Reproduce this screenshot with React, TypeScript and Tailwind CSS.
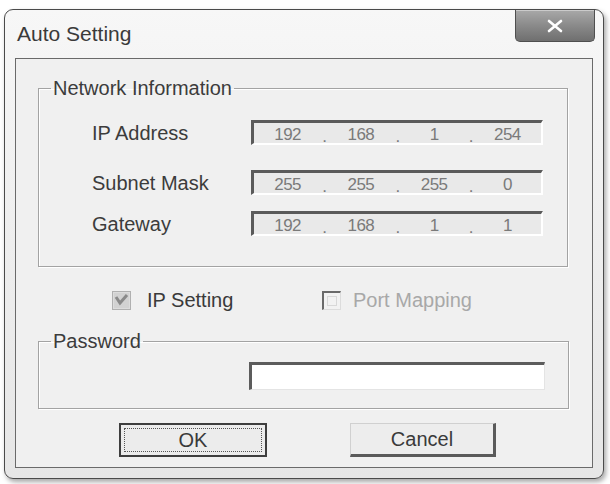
import React from "react";

const font = { fontFamily: '"Liberation Sans", Arial, sans-serif' };

function IpField({ parts }: { parts: string[] }) {
  return (
    <div className="w-[292px] h-[25px] bg-[#e9e9e9] border-t-[3px] border-l-[3px] border-[#5a5a5a] border-b-2 border-r-2 border-b-white border-r-white grid grid-cols-[1fr_6px_1fr_6px_1fr_6px_1fr] items-center text-[17px] leading-[20px] text-[#7a7a7a] tracking-[-0.5px]">
      <span className="text-center">{parts[0]}</span>
      <span className="text-center pt-[4px]">.</span>
      <span className="text-center">{parts[1]}</span>
      <span className="text-center pt-[4px]">.</span>
      <span className="text-center">{parts[2]}</span>
      <span className="text-center pt-[4px]">.</span>
      <span className="text-center">{parts[3]}</span>
    </div>
  );
}

function Row({ label, parts, className }: { label: string; parts: string[]; className?: string }) {
  return (
    <div className={"flex items-center " + (className ?? "")}>
      <div className="w-[212px] shrink-0 pl-[53px] text-[20px] leading-[22px] text-[#3c3c3c] whitespace-nowrap">{label}</div>
      <IpField parts={parts} />
    </div>
  );
}

export default function App() {
  return (
    <div className="w-[610px] h-[484px] bg-white pt-[9px] pl-[4px]" style={font}>
      <div className="w-[600px] h-[470px] rounded-[9px] border border-[#4a4a4a] bg-gradient-to-b from-[#f7f7f7] via-[#eeeeee] to-[#e6e6e6] flex flex-col px-[10px] shadow-[2px_3px_5px_rgba(0,0,0,0.35)]">
        {/* title bar */}
        <div className="h-[48px] flex justify-between">
          <div className="pl-[2px] pt-[12px] text-[21px] leading-[24px] text-[#3a3a3a]">Auto Setting</div>
          <div className="w-[80px] h-[32px] -mr-[2px] rounded-b-[5px] border border-t-0 border-[#4f4f4f] bg-gradient-to-b from-[#a9a9a9] via-[#8a8a8a] to-[#6f6f6f] flex items-center justify-center shadow-[inset_0_1px_0_rgba(255,255,255,0.4)]">
            <svg width="18" height="14" viewBox="0 0 18 14">
              <path d="M3 2 L15 12 M15 2 L3 12" stroke="#ffffff" strokeWidth="2.6" strokeLinecap="round" />
            </svg>
          </div>
        </div>

        {/* client area */}
        <div className="h-[410px] border border-[#6a6a6a] bg-[#f0f0f0] flex flex-col">
          <fieldset className="ml-[22px] mt-[18px] w-[530px] border border-[#a3a3a3] shadow-[inset_1px_1px_0_#fff,1px_1px_0_#fff] pt-[21px] pb-[30px]">
            <legend className="ml-[12px] px-[2px] text-[20px] leading-[22px] text-[#3c3c3c]">Network Information</legend>
            <Row label="IP Address" parts={["192", "168", "1", "254"]} />
            <Row label="Subnet Mask" parts={["255", "255", "255", "0"]} className="mt-[25px]" />
            <Row label="Gateway" parts={["192", "168", "1", "1"]} className="mt-[16px]" />
          </fieldset>

          {/* checkboxes */}
          <div className="mt-[23px] h-[20px] flex items-center">
            <div className="ml-[96px] w-[210px] flex items-center">
              <svg width="19" height="19" viewBox="0 0 19 19">
                <rect x="0.5" y="0.5" width="18" height="18" fill="#dcdcdc" stroke="#b0b0b0" />
                <rect x="2" y="2" width="15" height="15" fill="#d2d2d2" />
                <path d="M4 6 L8 12 L15 4" stroke="#8a8a8a" strokeWidth="3" fill="none" />
              </svg>
              <span className="ml-[16px] text-[20px] leading-[22px] text-[#3a3a3a]">IP Setting</span>
            </div>
            <div className="flex items-center">
              <div className="w-[19px] h-[19px] border-t-2 border-l-2 border-[#6a6a6a] border-b border-r border-b-[#dcdcdc] border-r-[#dcdcdc] bg-[#f2f2f2] p-[3px]">
                <div className="w-full h-full border border-[#d8d8d8]" />
              </div>
              <span className="ml-[12px] text-[20px] leading-[22px] text-[#a8a8a8]">Port Mapping</span>
            </div>
          </div>

          <fieldset className="ml-[22px] mt-[20px] w-[531px] border border-[#a3a3a3] shadow-[inset_1px_1px_0_#fff,1px_1px_0_#fff] pt-[10px] pb-[18px]">
            <legend className="ml-[12px] px-[2px] text-[20px] leading-[22px] text-[#3c3c3c]">Password</legend>
            <div className="ml-[210px] w-[296px] h-[28px] bg-white border-t-[3px] border-l-[3px] border-[#5c5c5c] border-b border-r border-b-[#e4e4e4] border-r-[#e4e4e4]" />
          </fieldset>

          {/* buttons */}
          <div className="mt-[14px] flex">
            <div className="ml-[103px] w-[148px] h-[34px] border-2 border-[#3e3e3e] bg-[#ececec] p-[3px]">
              <div className="w-full h-full border border-dotted border-[#555] flex items-center justify-center text-[20px] leading-[22px] text-[#3a3a3a]">OK</div>
            </div>
            <div className="ml-[83px] w-[146px] h-[34px] border-t border-l border-[#d0d0d0] border-b-[3px] border-r-[3px] border-b-[#5a5a5a] border-r-[#5a5a5a] bg-[#ededed] flex items-center justify-center text-[20px] leading-[22px] text-[#3a3a3a]">Cancel</div>
          </div>
        </div>
      </div>
    </div>
  );
}
